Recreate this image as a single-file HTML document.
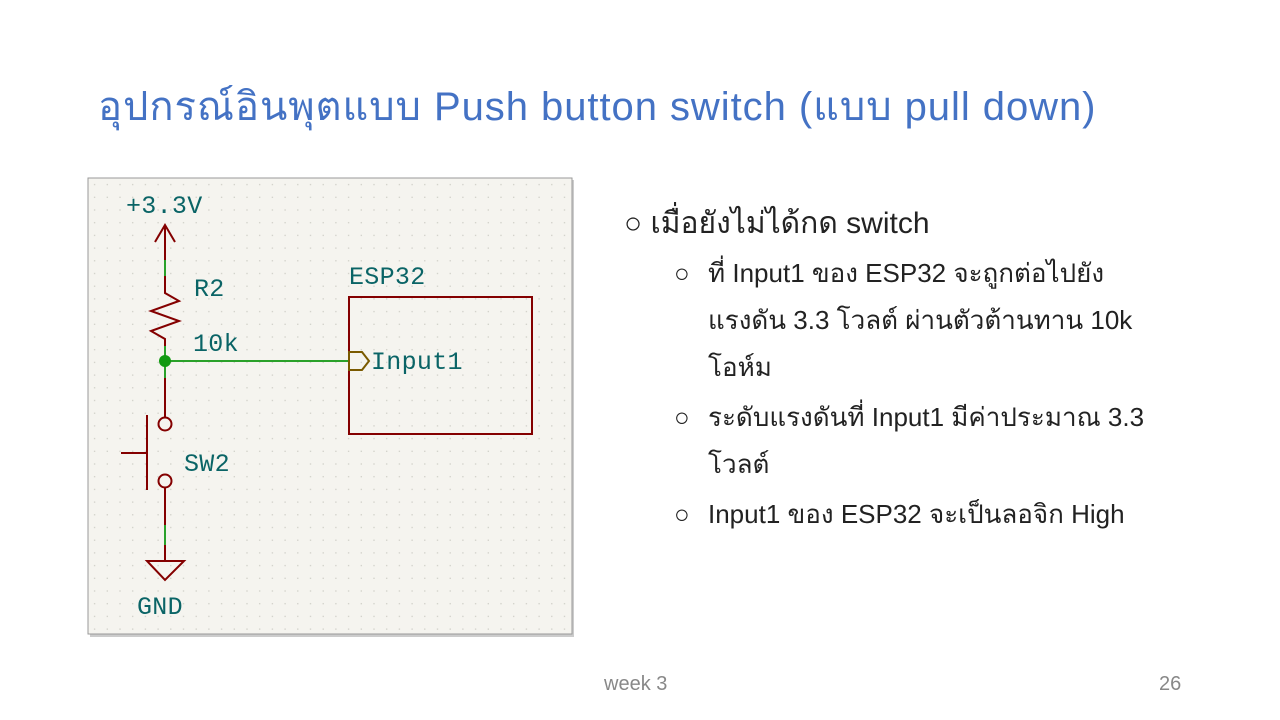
<!DOCTYPE html>
<html><head><meta charset="utf-8"><style>
body{margin:0;width:1280px;height:720px;background:#fff;position:relative;overflow:hidden;font-family:"Liberation Sans",sans-serif}
.t{position:absolute;white-space:nowrap}
h1{position:absolute;left:98px;top:74px;margin:0;font-weight:normal;font-size:40px;letter-spacing:0.95px;color:#4472c4}
.b1{font-size:30px;color:#222}
.b2{font-size:26px;color:#222;line-height:47px}
.c{font-size:30px}
</style></head><body>
<h1>อุปกรณ์อินพุตแบบ Push button switch (แบบ pull down)</h1>
<svg width="1280" height="720" style="position:absolute;left:0;top:0">
<defs><pattern id="g" x="88" y="178" width="12.7" height="12.7" patternUnits="userSpaceOnUse"><rect x="6" y="6" width="1.2" height="1.2" fill="#c8c8c0"/></pattern></defs>
<rect x="90" y="180" width="484" height="457" fill="#aaa" opacity=".6"/>
<rect x="88" y="178" width="484" height="456" fill="#f5f4ef" stroke="#999"/>
<rect x="88" y="178" width="484" height="456" fill="url(#g)"/>
<g fill="none" stroke="#840000" stroke-width="2">
<path d="M155 242 L165 225 L175 242 M165 225 V260"/>
<path d="M165 276 V293 L179 301 L151 311 L179 321 L151 331 L165 339 V346"/>
<path d="M165 378 V417"/>
<circle cx="165" cy="424" r="6.5"/><circle cx="165" cy="481" r="6.5"/>
<path d="M147 415 V490 M121 453 H147"/>
<path d="M165 488 V525 M165 545 V561"/>
<path d="M147 561 H184 L165 580 Z"/>
<rect x="349" y="297" width="183" height="137"/>
</g>
<g stroke="#2aa12a" stroke-width="2"><path d="M165 260 V276 M165 346 V378 M165 361 H349 M165 525 V545"/></g>
<circle cx="165" cy="361" r="6" fill="#129a12"/>
<path d="M349 352 H362 L369 361 L362 370 H349 Z" fill="none" stroke="#7a5a00" stroke-width="2"/>
<g fill="#0a6466" font-family="Liberation Mono,DejaVu Sans Mono,monospace" font-size="25" letter-spacing="0.3">
<text x="126" y="213">+3.3V</text><text x="194" y="296">R2</text><text x="193" y="351">10k</text>
<text x="349" y="284">ESP32</text><text x="371" y="369">Input1</text><text x="184" y="471">SW2</text><text x="137" y="614">GND</text>
</g>
</svg>
<div class="t b1" style="left:624px;top:200px"><span class="c">○</span> เมื่อยังไม่ได้กด switch</div>
<div class="t b2" style="left:674px;top:250px;white-space:normal;width:540px">
<div style="position:relative;padding-left:34px"><span style="position:absolute;left:0">○</span>ที่ Input1 ของ ESP32 จะถูกต่อไปยัง<br>แรงดัน 3.3 โวลต์ ผ่านตัวต้านทาน 10k<br>โอห์ม</div>
<div style="position:relative;padding-left:34px;margin-top:3px"><span style="position:absolute;left:0">○</span>ระดับแรงดันที่ Input1 มีค่าประมาณ 3.3<br>โวลต์</div>
<div style="position:relative;padding-left:34px;margin-top:3px"><span style="position:absolute;left:0">○</span>Input1 ของ ESP32 จะเป็นลอจิก High</div>
</div>
<div class="t" style="left:604px;top:673px;font-size:20px;color:#888">week 3</div>
<div class="t" style="left:1159px;top:673px;font-size:20px;color:#888">26</div>
</body></html>
